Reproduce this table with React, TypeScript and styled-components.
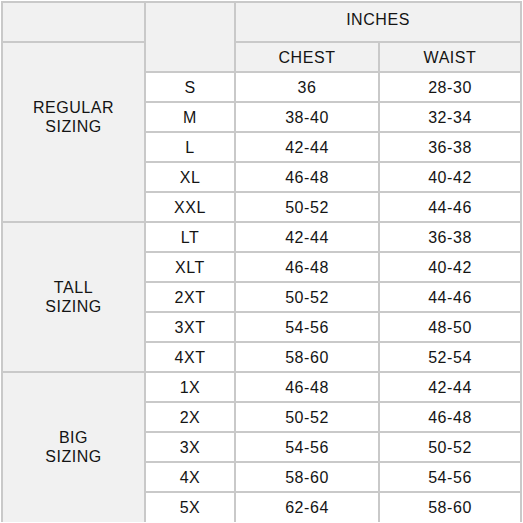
import styled, { createGlobalStyle } from 'styled-components';

const GlobalStyle = createGlobalStyle`
  html, body {
    margin: 0;
    padding: 0;
    background: #ffffff;
  }
  body {
    font-family: "Liberation Sans", Arial, sans-serif;
  }
`;

interface ISizeRow {
  size: string;
  chest: string;
  waist: string;
}

interface IGroup {
  label: string[];
  shift: number;
  rows: ISizeRow[];
}

const groups: IGroup[] = [
  {
    label: ['REGULAR', 'SIZING'],
    shift: 30,
    rows: [
      { size: 'S', chest: '36', waist: '28-30' },
      { size: 'M', chest: '38-40', waist: '32-34' },
      { size: 'L', chest: '42-44', waist: '36-38' },
      { size: 'XL', chest: '46-48', waist: '40-42' },
      { size: 'XXL', chest: '50-52', waist: '44-46' },
    ],
  },
  {
    label: ['TALL', 'SIZING'],
    shift: 0,
    rows: [
      { size: 'LT', chest: '42-44', waist: '36-38' },
      { size: 'XLT', chest: '46-48', waist: '40-42' },
      { size: '2XT', chest: '50-52', waist: '44-46' },
      { size: '3XT', chest: '54-56', waist: '48-50' },
      { size: '4XT', chest: '58-60', waist: '52-54' },
    ],
  },
  {
    label: ['BIG', 'SIZING'],
    shift: 2,
    rows: [
      { size: '1X', chest: '46-48', waist: '42-44' },
      { size: '2X', chest: '50-52', waist: '46-48' },
      { size: '3X', chest: '54-56', waist: '50-52' },
      { size: '4X', chest: '58-60', waist: '54-56' },
      { size: '5X', chest: '62-64', waist: '58-60' },
    ],
  },
];

const Chart = styled.table`
  margin: 1px 0 0 1px;
  width: 521px;
  table-layout: fixed;
  border-collapse: collapse;
  border-top: 2px solid #c9c9c9;
  border-left: 2px solid #c9c9c9;
  border-right: 2px solid #c9c9c9;
  color: #141414;
  font-size: 16px;
  letter-spacing: 0.55px;
`;

const Row = styled.tr<{ $tall?: boolean }>`
  height: ${(p) => (p.$tall ? '40px' : '30px')};
`;

const Cell = styled.td<{ $shade?: boolean; $lift?: number; $open?: boolean }>`
  padding: 0 0 ${(p) => p.$lift ?? 0}px 0;
  text-align: center;
  vertical-align: middle;
  line-height: 19px;
  border: 2px solid #c9c9c9;
  border-bottom: ${(p) => (p.$open ? 'none' : '2px solid #c9c9c9')};
  background: ${(p) => (p.$shade ? '#f1f1f1' : '#ffffff')};
  white-space: nowrap;
`;

const App = () => {
  return (
    <>
      <GlobalStyle />
      <Chart>
        <colgroup>
          <col style={{ width: 143 }} />
          <col style={{ width: 90 }} />
          <col style={{ width: 144 }} />
          <col style={{ width: 142 }} />
        </colgroup>
        <tbody>
          <Row $tall>
            <Cell $shade />
            <Cell $shade rowSpan={2} />
            <Cell $shade colSpan={2} $lift={6}>
              INCHES
            </Cell>
          </Row>
          <Row>
            <Cell $shade rowSpan={6} $lift={groups[0].shift}>
              {groups[0].label[0]}
              <br />
              {groups[0].label[1]}
            </Cell>
            <Cell $shade>CHEST</Cell>
            <Cell $shade>WAIST</Cell>
          </Row>
          {groups.map((group, gi) =>
            group.rows.map((row, ri) => {
              const lastGroup = gi === groups.length - 1;
              const open = lastGroup && ri === group.rows.length - 1;
              return (
                <Row key={row.size}>
                  {gi > 0 && ri === 0 && (
                    <Cell
                      $shade
                      $open={lastGroup}
                      $lift={group.shift}
                      rowSpan={group.rows.length}
                    >
                      {group.label[0]}
                      <br />
                      {group.label[1]}
                    </Cell>
                  )}
                  <Cell $open={open}>{row.size}</Cell>
                  <Cell $open={open}>{row.chest}</Cell>
                  <Cell $open={open}>{row.waist}</Cell>
                </Row>
              );
            })
          )}
        </tbody>
      </Chart>
    </>
  );
};

export default App;
